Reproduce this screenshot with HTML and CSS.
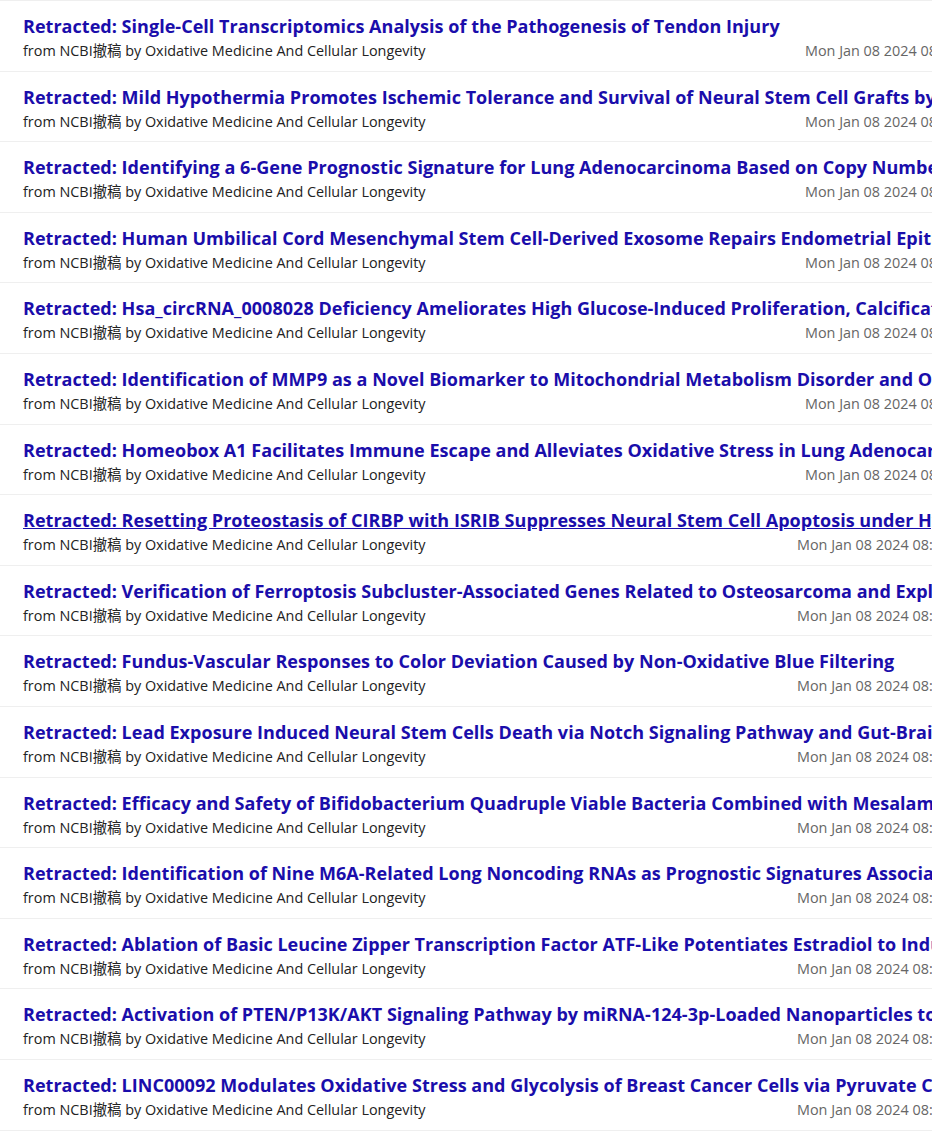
FILE: index.html
```html
<!DOCTYPE html>
<html>
<head>
    <title>Retraction Feed</title>
    <link rel="stylesheet" href="styles.css">
</head>
<body>
<div class="feed">
    <div class="item">
        <a class="title" href="#">Retracted: Single-Cell Transcriptomics Analysis of the Pathogenesis of Tendon Injury</a>
        <div class="meta"><span class="source">from NCBI撤稿 by Oxidative Medicine And Cellular Longevity</span><span class="date">Mon Jan 08 2024 08:00:31</span></div>
    </div>
    <div class="item">
        <a class="title" href="#">Retracted: Mild Hypothermia Promotes Ischemic Tolerance and Survival of Neural Stem Cell Grafts by Enhancing Global SUMOylation</a>
        <div class="meta"><span class="source">from NCBI撤稿 by Oxidative Medicine And Cellular Longevity</span><span class="date">Mon Jan 08 2024 08:00:31</span></div>
    </div>
    <div class="item">
        <a class="title" href="#">Retracted: Identifying a 6-Gene Prognostic Signature for Lung Adenocarcinoma Based on Copy Number Variation</a>
        <div class="meta"><span class="source">from NCBI撤稿 by Oxidative Medicine And Cellular Longevity</span><span class="date">Mon Jan 08 2024 08:00:31</span></div>
    </div>
    <div class="item">
        <a class="title" href="#">Retracted: Human Umbilical Cord Mesenchymal Stem Cell-Derived Exosome Repairs Endometrial Epithelial Cells Injury</a>
        <div class="meta"><span class="source">from NCBI撤稿 by Oxidative Medicine And Cellular Longevity</span><span class="date">Mon Jan 08 2024 08:00:31</span></div>
    </div>
    <div class="item">
        <a class="title" href="#">Retracted: Hsa_circRNA_0008028 Deficiency Ameliorates High Glucose-Induced Proliferation, Calcification, and Autophagy</a>
        <div class="meta"><span class="source">from NCBI撤稿 by Oxidative Medicine And Cellular Longevity</span><span class="date">Mon Jan 08 2024 08:00:31</span></div>
    </div>
    <div class="item">
        <a class="title" href="#">Retracted: Identification of MMP9 as a Novel Biomarker to Mitochondrial Metabolism Disorder and Oxidative Stress</a>
        <div class="meta"><span class="source">from NCBI撤稿 by Oxidative Medicine And Cellular Longevity</span><span class="date">Mon Jan 08 2024 08:00:31</span></div>
    </div>
    <div class="item">
        <a class="title" href="#">Retracted: Homeobox A1 Facilitates Immune Escape and Alleviates Oxidative Stress in Lung Adenocarcinoma</a>
        <div class="meta"><span class="source">from NCBI撤稿 by Oxidative Medicine And Cellular Longevity</span><span class="date">Mon Jan 08 2024 08:00:31</span></div>
    </div>
    <div class="item">
        <a class="title hover" href="#">Retracted: Resetting Proteostasis of CIRBP with ISRIB Suppresses Neural Stem Cell Apoptosis under Hypoxia</a>
        <div class="meta long"><span class="source">from NCBI撤稿 by Oxidative Medicine And Cellular Longevity</span><span class="date">Mon Jan 08 2024 08:52:17</span></div>
    </div>
    <div class="item">
        <a class="title" href="#">Retracted: Verification of Ferroptosis Subcluster-Associated Genes Related to Osteosarcoma and Exploration of Immune Targeted Therapy</a>
        <div class="meta long"><span class="source">from NCBI撤稿 by Oxidative Medicine And Cellular Longevity</span><span class="date">Mon Jan 08 2024 08:52:17</span></div>
    </div>
    <div class="item">
        <a class="title" href="#">Retracted: Fundus-Vascular Responses to Color Deviation Caused by Non-Oxidative Blue Filtering</a>
        <div class="meta long"><span class="source">from NCBI撤稿 by Oxidative Medicine And Cellular Longevity</span><span class="date">Mon Jan 08 2024 08:52:17</span></div>
    </div>
    <div class="item">
        <a class="title" href="#">Retracted: Lead Exposure Induced Neural Stem Cells Death via Notch Signaling Pathway and Gut-Brain Axis</a>
        <div class="meta long"><span class="source">from NCBI撤稿 by Oxidative Medicine And Cellular Longevity</span><span class="date">Mon Jan 08 2024 08:52:17</span></div>
    </div>
    <div class="item">
        <a class="title" href="#">Retracted: Efficacy and Safety of Bifidobacterium Quadruple Viable Bacteria Combined with Mesalamine against UC Management</a>
        <div class="meta long"><span class="source">from NCBI撤稿 by Oxidative Medicine And Cellular Longevity</span><span class="date">Mon Jan 08 2024 08:52:17</span></div>
    </div>
    <div class="item">
        <a class="title" href="#">Retracted: Identification of Nine M6A-Related Long Noncoding RNAs as Prognostic Signatures Associated with Oxidative Stress</a>
        <div class="meta long"><span class="source">from NCBI撤稿 by Oxidative Medicine And Cellular Longevity</span><span class="date">Mon Jan 08 2024 08:52:17</span></div>
    </div>
    <div class="item">
        <a class="title" href="#">Retracted: Ablation of Basic Leucine Zipper Transcription Factor ATF-Like Potentiates Estradiol to Induce Mandibular Bone Loss</a>
        <div class="meta long"><span class="source">from NCBI撤稿 by Oxidative Medicine And Cellular Longevity</span><span class="date">Mon Jan 08 2024 08:52:17</span></div>
    </div>
    <div class="item">
        <a class="title" href="#">Retracted: Activation of PTEN/P13K/AKT Signaling Pathway by miRNA-124-3p-Loaded Nanoparticles to Regulate Oxidative Stress</a>
        <div class="meta long"><span class="source">from NCBI撤稿 by Oxidative Medicine And Cellular Longevity</span><span class="date">Mon Jan 08 2024 08:52:17</span></div>
    </div>
    <div class="item">
        <a class="title" href="#">Retracted: LINC00092 Modulates Oxidative Stress and Glycolysis of Breast Cancer Cells via Pyruvate Carboxylase-Mediated AKT/mTOR Pathway</a>
        <div class="meta long"><span class="source">from NCBI撤稿 by Oxidative Medicine And Cellular Longevity</span><span class="date">Mon Jan 08 2024 08:52:17</span></div>
    </div>
</div>
</body>
</html>
```

FILE: styles.css
```css
html, body {
    margin: 0;
    padding: 0;
    background-color: white;
    overflow: hidden;
}

.feed {
    width: 1100px;
    font-family: "Open Sans", "Noto Sans CJK SC", sans-serif;
    border-top: 1px solid #efefef;
}

.item {
    padding: 13px 23px 8.6px 23px;
    border-bottom: 1px solid #efefef;
    white-space: nowrap;
}

.title {
    display: block;
    font-size: 18px;
    font-weight: bold;
    line-height: 24px;
    letter-spacing: 0.03px;
    color: #1a0dab;
    text-decoration: none;
    overflow: hidden;
}

.title.hover {
    text-decoration: underline;
}

.meta {
    display: grid;
    grid-template-columns: 782px auto;
    margin-top: 2px;
    font-size: 14.4px;
    line-height: 22px;
}

.meta.long {
    grid-template-columns: 774px auto;
}

.source {
    color: #222;
}

.date {
    color: #666;
}
```
